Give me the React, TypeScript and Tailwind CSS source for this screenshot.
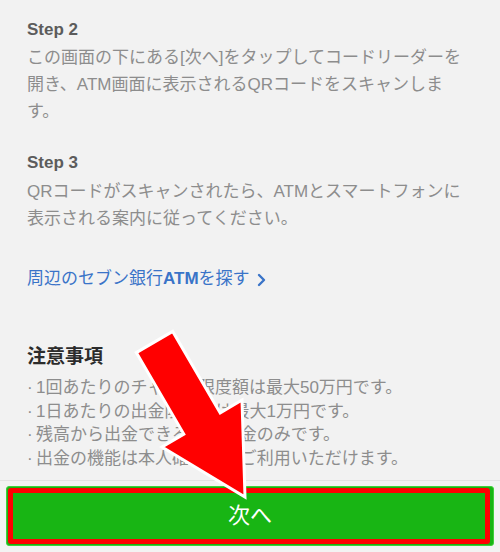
import React from "react";

const FONT = { fontFamily: '"Liberation Sans", "Noto Sans CJK JP", sans-serif' };

const notes = [
  "1回あたりのチャージ限度額は最大50万円です。",
  "1日あたりの出金限度額は最大1万円です。",
  "残高から出金できるのは現金のみです。",
  "出金の機能は本人確認後にご利用いただけます。",
];

function Chevron() {
  return (
    <svg width="9" height="14" viewBox="0 0 9 14" className="ml-[7px] mt-[2px]">
      <path d="M2 2 L7 7 L2 12" fill="none" stroke="#3a74c8" strokeWidth="2.4" strokeLinecap="round" strokeLinejoin="round" />
    </svg>
  );
}

// the red annotation arrow pointing at the button
function Arrow() {
  return (
    <svg className="pointer-events-none absolute left-0 top-0" width="500" height="552" viewBox="0 0 500 552">
      <polygon
        points="136.3,352.6 172.7,331.4 220.2,412.9 242,400 245,497 162,447 183.8,434.1"
        fill="#ff0000"
        stroke="#ffffff"
        strokeWidth="3"
        strokeLinejoin="miter"
      />
    </svg>
  );
}

export default function App() {
  return (
    <div className="relative flex h-[552px] w-[500px] flex-col overflow-hidden bg-[#f2f2f2]" style={FONT}>
      <div className="flex-1 px-[27px] pt-[19px]">
        {/* Step 2 */}
        <h3 className="text-[17px] font-bold leading-[22px] text-[#5c5c5c]">Step 2</h3>
        <p className="mt-[3px] whitespace-nowrap text-[17px] leading-[27px] text-[#8d8d8d]">
          この画面の下にある[次へ]をタップしてコードリーダーを
          <br />
          開き、ATM画面に表示されるQRコードをスキャンしま
          <br />
          す。
        </p>

        {/* Step 3 */}
        <h3 className="mt-[27px] text-[17px] font-bold leading-[22px] text-[#5c5c5c]">Step 3</h3>
        <p className="mt-[4px] whitespace-nowrap text-[17px] leading-[27px] text-[#8d8d8d]">
          QRコードがスキャンされたら、ATMとスマートフォンに
          <br />
          表示される案内に従ってください。
        </p>

        <a className="mt-[33px] flex items-center text-[17px] leading-[27px] text-[#3a74c8]">
          <span>
            周辺のセブン銀行<span className="font-bold">ATM</span>を探す
          </span>
          <Chevron />
        </a>

        {/* notes */}
        <h3 className="mt-[52px] text-[19px] font-bold leading-[26px] text-[#2c2c2c]">注意事項</h3>
        <ul className="mt-[6px] text-[17px] leading-[23.5px] text-[#8d8d8d]">
          {notes.map((n) => (
            <li key={n} className="flex whitespace-nowrap">
              <span className="w-[9px]">·</span>
              <span>{n}</span>
            </li>
          ))}
        </ul>
      </div>

      {/* bottom bar */}
      <div className="h-[72px] border-t border-[#e3e3e3] bg-[#f3f3f3] px-[6px] pt-[5px]">
        <div className="relative flex h-[60px] items-center justify-center rounded-[3px] border border-[#3fcf3a] bg-[#18b514]">
          <span className="text-[22px] leading-none text-white">次へ</span>
          <div className="pointer-events-none absolute left-[1px] right-[3px] top-[1px] bottom-[1px] rounded-[3px] border-[5px] border-[#ff0000]" />
        </div>
      </div>

      <Arrow />
    </div>
  );
}
